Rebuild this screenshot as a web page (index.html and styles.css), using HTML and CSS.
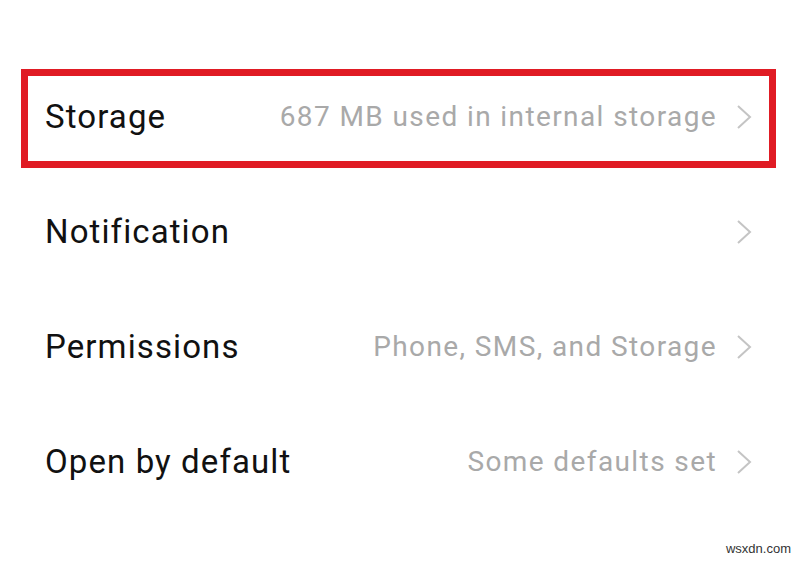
FILE: index.html
```html
<!DOCTYPE html>
<html>
<head>
<meta charset="utf-8">
<link rel="stylesheet" href="styles.css">
</head>
<body>
<div class="list">
  <div class="row highlighted">
    <span class="label">Storage</span>
    <span class="value">687 MB used in internal storage</span>
    <svg class="chev" viewBox="0 0 16 26" width="16" height="26"><polyline points="2,2 14,13 2,24" fill="none" stroke="#c4c4c4" stroke-width="2"/></svg>
  </div>
  <div class="row">
    <span class="label">Notification</span>
    <span class="value"></span>
    <svg class="chev" viewBox="0 0 16 26" width="16" height="26"><polyline points="2,2 14,13 2,24" fill="none" stroke="#c4c4c4" stroke-width="2"/></svg>
  </div>
  <div class="row">
    <span class="label">Permissions</span>
    <span class="value">Phone, SMS, and Storage</span>
    <svg class="chev" viewBox="0 0 16 26" width="16" height="26"><polyline points="2,2 14,13 2,24" fill="none" stroke="#c4c4c4" stroke-width="2"/></svg>
  </div>
  <div class="row">
    <span class="label">Open by default</span>
    <span class="value">Some defaults set</span>
    <svg class="chev" viewBox="0 0 16 26" width="16" height="26"><polyline points="2,2 14,13 2,24" fill="none" stroke="#c4c4c4" stroke-width="2"/></svg>
  </div>
</div>
<div class="watermark">wsxdn.com</div>
</body>
</html>
```
FILE: styles.css
```css
html, body {
  margin: 0;
  padding: 0;
  background: #ffffff;
}
body {
  width: 800px;
  height: 562px;
  position: relative;
  overflow: hidden;
  font-family: Roboto, "Noto Sans", sans-serif;
}
.list {
  display: flex;
  flex-direction: column;
  padding-top: 59px;
}
.row {
  position: relative;
  height: 115px;
  display: flex;
  align-items: center;
  padding: 0 48px 0 45px;
}
.label {
  font-size: 33px;
  letter-spacing: 1.1px;
  color: #111111;
  flex: 1;
}
.value {
  font-size: 28px;
  letter-spacing: 1.4px;
  color: #a9a9a9;
  margin-right: 19px;
}
.chev {
  display: block;
}
.highlighted::after {
  content: "";
  position: absolute;
  left: 21px;
  top: 10px;
  width: 741px;
  height: 85px;
  border: 7px solid #e01b24;
}
.watermark {
  position: absolute;
  right: 9px;
  bottom: 6px;
  font-family: "Liberation Sans", Arial, sans-serif;
  font-size: 13px;
  color: #333;
}
```
